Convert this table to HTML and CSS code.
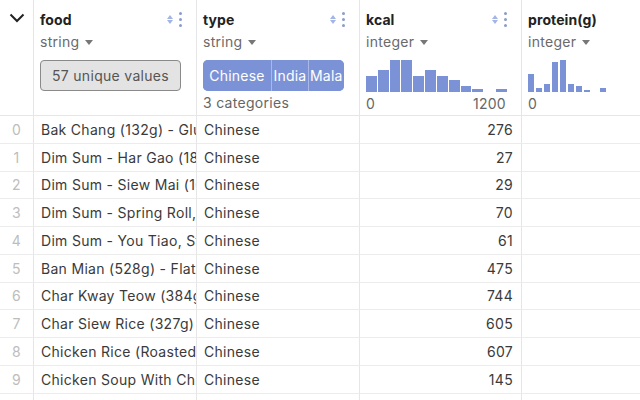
FILE: index.html
```
<!DOCTYPE html>
<html>
<head>
<meta charset="utf-8">
<link rel="stylesheet" href="styles.css">
</head>
<body>
<div class="grid">
  <div class="hcell idx-h">
    <svg class="chev" width="16" height="10" viewBox="0 0 16 10"><polyline points="1.5,1.5 8,8 14.5,1.5" fill="none" stroke="#222" stroke-width="2"/></svg>
  </div>
  <div class="hcell">
    <div class="title"><span>food</span><span class="icons"><span class="sort"><i class="up"></i><i class="dn"></i></span><span class="kebab"><i></i><i></i><i></i></span></span></div>
    <div class="dtype">string <span class="caret"></span></div>
    <div class="pill">57 unique values</div>
  </div>
  <div class="hcell">
    <div class="title"><span>type</span><span class="icons"><span class="sort"><i class="up"></i><i class="dn"></i></span><span class="kebab"><i></i><i></i><i></i></span></span></div>
    <div class="dtype">string <span class="caret"></span></div>
    <div class="cats"><span class="cat c1">Chinese</span><span class="cat c2">India</span><span class="cat c3">Mala</span></div>
    <div class="lbl">3 categories</div>
  </div>
  <div class="hcell">
    <div class="title"><span>kcal</span><span class="icons"><span class="sort"><i class="up"></i><i class="dn"></i></span><span class="kebab"><i></i><i></i><i></i></span></span></div>
    <div class="dtype">integer <span class="caret"></span></div>
    <div class="hist">
      <b style="height:16px"></b><b style="height:22px"></b><b style="height:32px"></b><b style="height:32px"></b><b style="height:16px"></b><b style="height:22px"></b><b style="height:16px"></b><b style="height:12.5px"></b><b style="height:6px"></b><b style="height:3px"></b><b style="height:0px"></b><b style="height:3px"></b>
    </div>
    <div class="lbl range"><span>0</span><span>1200</span></div>
  </div>
  <div class="hcell last">
    <div class="title"><span>protein(g)</span></div>
    <div class="dtype">integer <span class="caret"></span></div>
    <div class="hist small">
      <b style="height:18px"></b><b style="height:4px"></b><b style="height:8px"></b><b style="height:30px"></b><b style="height:32px"></b><b style="height:8px"></b><b style="height:6px"></b><b style="height:2px"></b><b style="height:0px"></b><b style="height:4px"></b>
    </div>
    <div class="lbl"><span>0</span></div>
  </div>

  <div class="cell idx">0</div><div class="cell">Bak Chang (132g) - Glutinous Rice Dumpling</div><div class="cell">Chinese</div><div class="cell num">276</div><div class="cell last"></div>
  <div class="cell idx">1</div><div class="cell">Dim Sum - Har Gao (18g)</div><div class="cell">Chinese</div><div class="cell num">27</div><div class="cell last"></div>
  <div class="cell idx">2</div><div class="cell">Dim Sum - Siew Mai (16g)</div><div class="cell">Chinese</div><div class="cell num">29</div><div class="cell last"></div>
  <div class="cell idx">3</div><div class="cell">Dim Sum - Spring Roll, Fried</div><div class="cell">Chinese</div><div class="cell num">70</div><div class="cell last"></div>
  <div class="cell idx">4</div><div class="cell">Dim Sum - You Tiao, Stick</div><div class="cell">Chinese</div><div class="cell num">61</div><div class="cell last"></div>
  <div class="cell idx">5</div><div class="cell">Ban Mian (528g) - Flat Noodles</div><div class="cell">Chinese</div><div class="cell num">475</div><div class="cell last"></div>
  <div class="cell idx">6</div><div class="cell">Char Kway Teow (384g)</div><div class="cell">Chinese</div><div class="cell num">744</div><div class="cell last"></div>
  <div class="cell idx">7</div><div class="cell">Char Siew Rice (327g)</div><div class="cell">Chinese</div><div class="cell num">605</div><div class="cell last"></div>
  <div class="cell idx">8</div><div class="cell">Chicken Rice (Roasted)</div><div class="cell">Chinese</div><div class="cell num">607</div><div class="cell last"></div>
  <div class="cell idx">9</div><div class="cell">Chicken Soup With Chinese Herbs</div><div class="cell">Chinese</div><div class="cell num">145</div><div class="cell last"></div>
  <div class="cell idx">10</div><div class="cell">Claypot Rice</div><div class="cell">Chinese</div><div class="cell num">400</div><div class="cell last"></div>
</div>
</body>
</html>
```
FILE: styles.css
```
html, body {
  margin: 0;
  padding: 0;
  background: #fff;
  overflow: hidden;
}
body {
  font-family: Inter, "Liberation Sans", sans-serif;
  font-size: 14px;
  letter-spacing: 0.3px;
  color: #3a3a3a;
  width: 640px;
  height: 400px;
}
.grid {
  display: grid;
  grid-template-columns: 34px 163px 163px 162px 200px;
  grid-auto-rows: 27.75px;
  grid-template-rows: 116px;
}
.hcell {
  border-right: 1px solid #e6e6e6;
  border-bottom: 1px solid #e6e6e6;
  padding: 9px 15px 0 6px;
  overflow: hidden;
  white-space: nowrap;
}
.hcell.last, .cell.last { border-right: none; padding-right: 0; }
.idx-h { padding: 0; }
.chev { display: block; margin: 13px 0 0 9px; }
.title {
  display: flex;
  justify-content: space-between;
  align-items: center;
  height: 20px;
  font-weight: 700;
  letter-spacing: 0.1px;
  color: #222;
}
.icons { display: flex; align-items: center; gap: 6px; margin-right: -1px; }
.sort { display: flex; flex-direction: column; gap: 1px; }
.sort i { display: block; width: 0; height: 0; border-left: 3.5px solid transparent; border-right: 3.5px solid transparent; }
.sort .up { border-bottom: 4px solid #a3b5e4; }
.sort .dn { border-top: 4px solid #a3b5e4; }
.kebab { display: flex; flex-direction: column; gap: 3px; padding-top: 1px; }
.kebab i { display: block; width: 3px; height: 3px; border-radius: 50%; background: #8a9cc9; }
.dtype {
  margin-top: 3px;
  height: 20px;
  line-height: 20px;
  color: #6a6a6a;
}
.caret {
  display: inline-block;
  width: 0; height: 0;
  border-left: 4px solid transparent;
  border-right: 4px solid transparent;
  border-top: 5px solid #777;
  vertical-align: middle;
  margin-left: 1px;
  position: relative;
  top: -1px;
}
.pill {
  margin-top: 8px;
  height: 31px;
  box-sizing: border-box;
  border: 1px solid #8a8a8a;
  border-radius: 4px;
  background: #e3e3e3;
  color: #555;
  display: flex;
  align-items: center;
  justify-content: center;
  width: 141px;
}
.cats {
  margin-top: 8px;
  height: 31px;
  width: 141px;
  display: flex;
  border-radius: 5px;
  overflow: hidden;
  background: #7b93d6;
}
.cat {
  background: #7b93d6;
  color: #fff;
  display: flex;
  align-items: center;
  justify-content: center;
  overflow: hidden;
  box-sizing: border-box;
  letter-spacing: 0.2px;
}
.c1 { width: 69px; border-right: 1px solid #a9b8e6; }
.c2 { width: 37px; border-right: 1px solid #a9b8e6; }
.c3 { flex: 1; justify-content: flex-start; padding-left: 1px; }
.lbl {
  margin-top: 2px;
  height: 20px;
  line-height: 20px;
  color: #666;
}
.range { display: flex; justify-content: space-between; width: 140px; }
.hist {
  margin-top: 8px;
  height: 32px;
  width: 141px;
  display: flex;
  align-items: flex-end;
  gap: 1px;
}
.hist b {
  display: block;
  flex: 1;
  background: #7b93d6;
}
.hist.small { width: 78px; gap: 1.5px; }
.cell {
  border-right: 1px solid #e6e6e6;
  border-bottom: 1px solid #ececec;
  padding: 0 8px 0 7px;
  display: flex;
  align-items: center;
  white-space: nowrap;
  overflow: hidden;
}
.cell.num { justify-content: flex-end; }
.cell.idx { justify-content: center; color: #bdbdbd; padding: 0; }
```
